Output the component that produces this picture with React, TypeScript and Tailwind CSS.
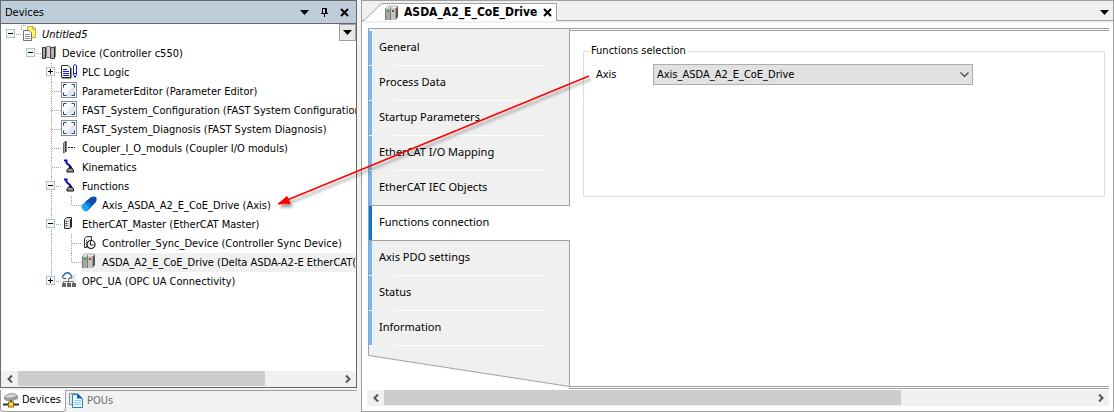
import React, { useState } from 'react';
import clsx from 'clsx';

type IconName =
  | 'project' | 'device' | 'plc' | 'params' | 'coupler' | 'robot'
  | 'axis' | 'master' | 'sync' | 'drive' | 'opc';

// guide cells: ' ' empty, '|' line, 't' tee, 'l' last child,
// '+'/'-' expander, 'p'/'m' expander with the line going on below
interface TreeRow {
  guides: string;
  icon: IconName;
  label: string;
  italic?: boolean;
  selected?: boolean;
}

const treeRows: TreeRow[] = [
  { guides: '-', icon: 'project', label: 'Untitled5', italic: true },
  { guides: ' -', icon: 'device', label: 'Device (Controller c550)' },
  { guides: '  p', icon: 'plc', label: 'PLC Logic' },
  { guides: '  t', icon: 'params', label: 'ParameterEditor (Parameter Editor)' },
  { guides: '  t', icon: 'params', label: 'FAST_System_Configuration (FAST System Configuration' },
  { guides: '  t', icon: 'params', label: 'FAST_System_Diagnosis (FAST System Diagnosis)' },
  { guides: '  t', icon: 'coupler', label: 'Coupler_I_O_moduls (Coupler I/O moduls)' },
  { guides: '  t', icon: 'robot', label: 'Kinematics' },
  { guides: '  m', icon: 'robot', label: 'Functions' },
  { guides: '  |l', icon: 'axis', label: 'Axis_ASDA_A2_E_CoE_Drive (Axis)' },
  { guides: '  m', icon: 'master', label: 'EtherCAT_Master (EtherCAT Master)' },
  { guides: '  |t', icon: 'sync', label: 'Controller_Sync_Device (Controller Sync Device)' },
  { guides: '  |l', icon: 'drive', label: 'ASDA_A2_E_CoE_Drive (Delta ASDA-A2-E EtherCAT(', selected: true },
  { guides: '  +', icon: 'opc', label: 'OPC_UA (OPC UA Connectivity)' },
];

const pages = [
  'General',
  'Process Data',
  'Startup Parameters',
  'EtherCAT I/O Mapping',
  'EtherCAT IEC Objects',
  'Functions connection',
  'Axis PDO settings',
  'Status',
  'Information',
];

function Guide({ kind }: { kind: string }) {
  const up = '|tlmp+'.includes(kind);
  const down = '|tmp'.includes(kind);
  const side = kind !== '|' && kind !== ' ';
  const box = '+-mp'.includes(kind);
  const plus = kind === '+' || kind === 'p';
  return (
    <svg width="20" height="19" viewBox="0 0 20 19" className="shrink-0" shapeRendering="crispEdges" aria-hidden="true">
      <g stroke="#a0a0a0" strokeDasharray="1 1">
        {up && <path d="M10.5 0V9" />}
        {down && <path d="M10.5 10V19" />}
        {side && <path d="M11 9.5H20" />}
      </g>
      {box && (
        <>
          <rect x="5.5" y="4.5" width="8" height="8" rx="1" fill="#f6f8f8" stroke="#a9c3c6" />
          <path d="M7 8.5H12" stroke="#000" />
          {plus && <path d="M9.5 6V11" stroke="#000" />}
        </>
      )}
    </svg>
  );
}

function DriveGlyph() {
  return (
    <g>
      <path d="M1 4L4 1H14L11.500 4Z" fill="#ececec" stroke="#8a8a8a" strokeWidth=".6" />
      <path d="M1.500 4H6V15H1.500Z" fill="#a6a6a6" />
      <path d="M6 4H11.500V15H6Z" fill="#c4c4c4" />
      <path d="M1.500 4V15M6.500 2V15" stroke="#777" />
      <path d="M11.500 4L14 1.500V12L11.500 15Z" fill="#555" />
      <rect x="3" y="5" width="2" height="2" fill="#00c814" />
      <rect x="8" y="5" width="2" height="2" fill="#c83232" />
    </g>
  );
}

function TreeIcon({ name }: { name: IconName }) {
  return (
    <svg width="16" height="16" viewBox="0 0 16 16" className="shrink-0 self-start" aria-hidden="true">
      {name === 'project' && (
        <>
          <path d="M6.5 1.5H12L14.5 4V12.5H6.5Z" fill="#fff36b" stroke="#c2b23a" />
          <path d="M12 1.5V4H14.5" fill="#fff" stroke="#8b8340" />
          <path d="M2.5 5.5H8L10.5 8V15.5H2.5Z" fill="#fff" stroke="#707070" />
          <path d="M4 9.5H9M4 11.5H9M4 13.5H9" stroke="#909090" />
          <path d="M.5 5V.5H5" fill="none" stroke="#888" strokeDasharray="1 1" />
        </>
      )}
      {name === 'device' && (
        <g>
          <path d="M1.5 3.5H4.5V14.5H1.5Z" fill="#9b9b9b" stroke="#333" />
          <path d="M5.5 2.5H9.5V13.5H5.5Z" fill="#d6d6d6" stroke="#777" />
          <path d="M9.5 3.5H13.5V14.5H9.5Z" fill="#a8a8a8" stroke="#444" />
          <path d="M3 5V11M11.5 5V11" stroke="#eee" strokeDasharray="1 1" />
          <path d="M14 2V13" stroke="#111" />
        </g>
      )}
      {name === 'plc' && (
        <>
          <path d="M.5 2.5H7L9.5 5V14.5H.5Z" fill="#fff" stroke="#333" />
          <path d="M1 15H10V5" fill="none" stroke="#222" />
          <path d="M2 6.5H6M2 8.5H8M2 10.5H8M2 12.5H8" stroke="#1414ff" />
          <path d="M12.5 11.5V2.5Q14 .5 15.5 2.5V11.5L14 14.500Z" fill="#fff" stroke="#1414e0" />
          <path d="M13 10.5H15" stroke="#1414e0" />
        </>
      )}
      {name === 'params' && (
        <>
          <rect x=".5" y=".5" width="15" height="15" fill="#fafafa" stroke="#8b8b8b" />
          <path d="M14 3V14H3Z" fill="#e2e6ea" />
          <path d="M2.5 5.5V2.5H5.500M10.500 2.5H13.5V5.500M13.5 10.5V13.5H10.5M5.500 13.5H2.5V10.5" fill="none" stroke="#0a4f9e" />
        </>
      )}
      {name === 'coupler' && (
        <>
          <path d="M2.5 4L4.5 2.5V12.5L2.5 14Z" fill="#aaa" stroke="#666" />
          <path d="M5 2V13" stroke="#111" />
          <path d="M7 8.5H14" stroke="#111" strokeDasharray="2 1" />
        </>
      )}
      {name === 'robot' && (
        <>
          <path d="M3 2.5H5.500V5L9.500 8.500" fill="none" stroke="#0a0ac8" strokeWidth="2" />
          <path d="M6 12L8 9.500H10.500L12.500 12V14H6Z" fill="#999" stroke="#111" />
          <circle cx="9.5" cy="9.5" r="1.500" fill="#111" />
        </>
      )}
      {name === 'axis' && (
        <>
          <path d="M4 6L9.500 1.5Q12 0 15 1Q16.500 4 14.5 6.5L9 12Z" fill="#0a4fa6" />
          <path d="M1 9L5 5.5C9 6 11 9 10 11.5L6.5 15Z" fill="#0d7ad6" />
          <ellipse cx="4.200" cy="11.5" rx="3.200" ry="4" transform="rotate(-40 4.200 11.500)" fill="#18a0f2" />
        </>
      )}
      {name === 'master' && (
        <>
          <path d="M3.5 4.5L5.5 2.5H10.5V12L9 13.5H3.5Z" fill="#ddd" stroke="#333" />
          <path d="M9 5V13L10.5 11.5V3Z" fill="#222" />
          <path d="M5.5 6V12" stroke="#222" strokeWidth="1.5" strokeDasharray="1 1" />
        </>
      )}
      {name === 'sync' && (
        <>
          <path d="M3.5 4.5L5.5 2.5H10.5V7M3.5 4.5V13.5H6" fill="#eee" stroke="#333" />
          <path d="M5.5 6V13" stroke="#333" strokeDasharray="1 1" />
          <circle cx="10" cy="10.5" r="4" fill="#fff" stroke="#111" strokeWidth="1.200" />
          <path d="M9.5 7.5V11H12.5" fill="none" stroke="#111" />
        </>
      )}
      {name === 'drive' && <DriveGlyph />}
      {name === 'opc' && (
        <>
          <path d="M10 6L15 1V9H10Z" fill="#ededed" />
          <path d="M5 6.5C1 7 .5 3.500 3 3C4 0 9 0 9.5 3C12 3.500 11 6.5 8 6" fill="#fff" stroke="#2d6ca8" strokeWidth="1.300" />
          <path d="M7.500 6V10M2.5 12V9.5H12.5V12M7.5 9V12" fill="none" stroke="#777" />
          <path d="M1 11H5V15H1ZM6 11H10V15H6ZM11 11H15V15H11Z" fill="#666" />
        </>
      )}
    </svg>
  );
}

function DownArrow() {
  return (
    <svg width="9" height="5" viewBox="0 0 9 5" aria-hidden="true">
      <path d="M0 0H9L4.5 5Z" fill="#000" />
    </svg>
  );
}

function CloseGlyph() {
  return (
    <svg width="9" height="9" viewBox="0 0 9 9" aria-hidden="true">
      <path d="M1 1L8 8M8 1L1 8" stroke="#000" strokeWidth="2" />
    </svg>
  );
}

function ScrollBar({ thumb }: { thumb: string }) {
  return (
    <div className="flex h-4 shrink-0 bg-[#f0f0f0]">
      <button aria-label="Scroll left" className="flex w-[17px] items-center justify-center">
        <svg width="6" height="8" viewBox="0 0 6 8" aria-hidden="true">
          <path d="M5 .5L1.5 4L5 7.5" fill="none" stroke="#555" strokeWidth="2" />
        </svg>
      </button>
      <div className="flex-1">
        <div className={clsx('h-[15px] bg-[#cdcdcd]', thumb)} />
      </div>
      <button aria-label="Scroll right" className="flex w-[17px] items-center justify-center">
        <svg width="6" height="8" viewBox="0 0 6 8" aria-hidden="true">
          <path d="M1 .5L4.5 4L1 7.5" fill="none" stroke="#555" strokeWidth="2" />
        </svg>
      </button>
    </div>
  );
}

function DevicesPane() {
  return (
    <aside className="flex w-[357px] shrink-0 flex-col">
      <div className="flex min-h-0 flex-1 flex-col border border-[#696969] bg-white">
        <header className="flex h-[23px] shrink-0 items-center border-b border-[#696969] bg-[#bfcddb] pl-1">
          <h2 className="flex-1">Devices</h2>
          <button aria-label="Window position" className="flex w-5 justify-center"><DownArrow /></button>
          <button aria-label="Auto hide" className="flex w-5 justify-center">
            <svg width="7" height="9" viewBox="0 0 7 9" shapeRendering="crispEdges" aria-hidden="true">
              <path d="M1.5 5V.5H5.5V5M0 5.5H7M3.5 6V9M4.5 1V5" fill="none" stroke="#000" />
            </svg>
          </button>
          <button aria-label="Close Devices" className="mr-[2px] flex w-5 justify-center"><CloseGlyph /></button>
        </header>

        <div className="relative min-h-0 flex-1 overflow-hidden">
          <ul className="pt-px">
            {treeRows.map((row) => (
              <li key={row.label} className="flex h-[19px] items-center">
                {row.guides.split('').map((kind, i) => (
                  <Guide key={i} kind={kind} />
                ))}
                <span className={clsx('flex h-[19px] min-w-0 flex-1 items-center whitespace-nowrap', row.selected && 'bg-[#f0f0f0]')}>
                  <TreeIcon name={row.icon} />
                  <span className={clsx('ml-[5px]', row.italic && 'italic')}>{row.label}</span>
                </span>
              </li>
            ))}
          </ul>
          <button
            aria-label="Tree options"
            className="absolute right-0 top-0 flex h-[17px] w-[17px] items-center justify-center border border-[#a0a0a0] bg-[#e8e8e8]"
          >
            <DownArrow />
          </button>
        </div>

        <ScrollBar thumb="w-[77%]" />
      </div>

      {/* Bottom tabs */}
      <div className="mt-[2px] flex h-[22px] shrink-0 items-stretch">
        <button className="flex w-[66px] items-center gap-[3px] rounded-b-sm border border-t-0 border-[#a0a0a0] bg-white pb-[2px] pl-[2px]">
          <svg width="16" height="16" viewBox="0 0 16 16" aria-hidden="true">
            <path d="M1 5L6 1.5H12L15 4V7L10 9H3L1 7Z" fill="#a0a0a0" />
            <path d="M1.5 4.5L6 2H12L14.5 4L9 6H3Z" fill="#dcdcdc" stroke="#777" strokeWidth=".6" />
            <path d="M0 12.5H16" stroke="#333" strokeWidth="2" />
            <path d="M8 8V11" stroke="#555" strokeWidth="2" />
            <rect x="5.5" y="10" width="5" height="5" fill="#ffd34d" stroke="#9a6a00" />
          </svg>
          Devices
        </button>
        <button className="flex flex-1 items-center gap-[3px] border-t border-[#a0a0a0] pb-[3px] pl-[2px] text-[#6d6d6d]">
          <svg width="16" height="16" viewBox="0 0 16 16" aria-hidden="true">
            <path d="M1.5 1.5H8V12.5H1.5Z" fill="#dde6ec" stroke="#8395a1" />
            <path d="M4.5 2.5H10L14.5 6.5V15.5H4.5Z" fill="#eaf7ff" stroke="#3b7ea6" />
            <path d="M9 1L14.5 6.5H9Z" fill="#0b5fc4" />
            <path d="M6 8.5H13M6 10.5H13M6 12.5H13" stroke="#8fd0f5" />
          </svg>
          POUs
        </button>
      </div>
    </aside>
  );
}

function PageNav({ active, onSelect }: { active: string; onSelect: (page: string) => void }) {
  return (
    <nav className="flex w-[202px] shrink-0 flex-col">
      <div className="h-[2px] shrink-0 border-x border-[#a0a0a0] bg-[#f0f0f0]" />
      {pages.map((page, index) => {
        const selected = page === active;
        const beforeSelected = pages[index + 1] === active;
        return (
          <button
            key={page}
            onClick={() => onSelect(page)}
            className={clsx(
              'flex h-[35px] shrink-0 flex-col border-l border-[#a0a0a0] text-left',
              selected ? 'bg-white' : 'border-r bg-[#f0f0f0]',
            )}
          >
            <span className="flex w-full flex-1 items-center">
              <span className={clsx('w-[3px] self-stretch', selected ? 'bg-[#0078d7]' : 'bg-[#6eb9ff]')} />
              <span className="ml-[7px] pb-[3px] font-['Noto_Sans',sans-serif] text-[11px]">{page}</span>
            </span>
            {selected || beforeSelected ? (
              <span className="h-px w-full bg-[#a0a0a0]" />
            ) : (
              <span className="flex h-px w-full">
                <span className="w-[3px] bg-white" />
                <span className="ml-[22px] mr-[25px] flex-1 bg-white" />
              </span>
            )}
          </button>
        );
      })}
      <svg viewBox="0 0 202 41" preserveAspectRatio="none" className="h-[41px] w-full shrink-0" aria-hidden="true">
        <path d="M.5 0V9.5L201.5 40.5V0" fill="#f0f0f0" stroke="#a0a0a0" />
      </svg>
    </nav>
  );
}

function EditorPane() {
  const [page, setPage] = useState('Functions connection');

  return (
    <main className="flex min-w-0 flex-1 flex-col border border-[#a0a0a0] bg-white">
      <div className="flex h-[20px] shrink-0 items-end border-b border-[#a0a0a0] bg-[#f0f0f0]">
        <svg width="22" height="18" viewBox="0 0 22 18" className="-mb-px" aria-hidden="true">
          <path d="M0 17.5H2L18 2Q19.5 .5 22 .5V18H0Z" fill="#fff" />
          <path d="M0 17.5H2L18 2Q19.5 .5 22 .5" fill="none" stroke="#a0a0a0" />
        </svg>
        <div className="-mb-px flex h-[18px] items-center border-r border-t border-[#a0a0a0] bg-white">
          <button className="flex items-center gap-1 text-[12px] font-bold">
            <svg width="16" height="16" viewBox="0 0 16 16" aria-hidden="true"><DriveGlyph /></svg>
            ASDA_A2_E_CoE_Drive
          </button>
          <button aria-label="Close editor" className="ml-[6px] mr-1"><CloseGlyph /></button>
        </div>
        <button aria-label="Open editors" className="mb-[5px] ml-auto mr-1"><DownArrow /></button>
      </div>
      <div className="h-[2px] shrink-0 bg-[#f0f0f0]" />

      <div className="ml-[6px] mr-1 mt-[5px] flex min-h-0 flex-1 border-t border-[#a0a0a0]">
        <PageNav active={page} onSelect={setPage} />
        <section className="-ml-px flex min-w-0 flex-1 flex-col border-b border-[#a0a0a0] pb-px pt-px">
          <div className="flex-1 border-y border-[#a0a0a0] pl-[14px] pr-1 pt-[13px]">
            <fieldset className="h-[153px] border border-[#dcdcdc] px-3">
              <legend className="-ml-[7px] px-[2px] leading-[14px]">Functions selection</legend>
              <div className="mt-[6px] flex items-center">
                <label htmlFor="axis" className="w-[57px]">Axis</label>
                <div className="relative w-[320px]">
                  <select
                    id="axis"
                    className="block h-[21px] w-full appearance-none border border-[#adadad] bg-[#e1e1e1] pl-[3px] outline-none"
                  >
                    <option>Axis_ASDA_A2_E_CoE_Drive</option>
                  </select>
                  <svg width="9" height="6" viewBox="0 0 9 6" className="pointer-events-none absolute right-1 top-2" aria-hidden="true">
                    <path d="M.5 .5L4.5 4.5L8.5 .5" fill="none" stroke="#444" strokeWidth="1.200" />
                  </svg>
                </div>
              </div>
            </fieldset>
          </div>
        </section>
      </div>

      <div className="mb-[5px] ml-[5px] mr-1 mt-px">
        <ScrollBar thumb="w-[73%]" />
      </div>
    </main>
  );
}

// Red pointer from the axis selection to its node in the tree
function LinkArrow() {
  return (
    <svg width="330" height="150" viewBox="0 0 330 150" className="pointer-events-none absolute left-[270px] top-[65px]" aria-hidden="true">
      <defs>
        <filter id="arrow-shadow" x="-10%" y="-10%" width="120%" height="130%">
          <feDropShadow dx="2" dy="3" stdDeviation="1.500" floodColor="#000" floodOpacity=".4" />
        </filter>
      </defs>
      <g filter="url(#arrow-shadow)">
        <path d="M319 11L16 135.500" stroke="#f00" strokeWidth="1.500" />
        <path d="M8 139L17 131.500L20 138.500Z" fill="#f00" stroke="#f00" />
      </g>
    </svg>
  );
}

export default function App() {
  return (
    <div className="relative flex h-screen w-full gap-1 overflow-hidden bg-[#f2f2f2] font-['DejaVu_Sans_Condensed','DejaVu_Sans',sans-serif] text-[11px] leading-[15px] text-black">
      <DevicesPane />
      <EditorPane />
      <LinkArrow />
    </div>
  );
}
